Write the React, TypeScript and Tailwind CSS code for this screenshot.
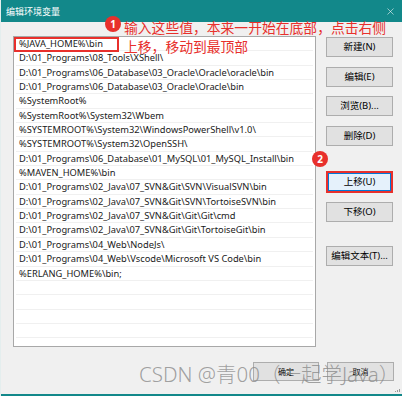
import { X } from 'lucide-react'

const paths = [
  '%JAVA_HOME%\\bin',
  'D:\\01_Programs\\08_Tools\\XShell\\',
  'D:\\01_Programs\\06_Database\\03_Oracle\\Oracle\\oracle\\bin',
  'D:\\01_Programs\\06_Database\\03_Oracle\\Oracle\\bin',
  '%SystemRoot%',
  '%SystemRoot%\\System32\\Wbem',
  '%SYSTEMROOT%\\System32\\WindowsPowerShell\\v1.0\\',
  '%SYSTEMROOT%\\System32\\OpenSSH\\',
  'D:\\01_Programs\\06_Database\\01_MySQL\\01_MySQL_Install\\bin',
  '%MAVEN_HOME%\\bin',
  'D:\\01_Programs\\02_Java\\07_SVN&Git\\SVN\\VisualSVN\\bin',
  'D:\\01_Programs\\02_Java\\07_SVN&Git\\SVN\\TortoiseSVN\\bin',
  'D:\\01_Programs\\02_Java\\07_SVN&Git\\Git\\Git\\cmd',
  'D:\\01_Programs\\02_Java\\07_SVN&Git\\Git\\TortoiseGit\\bin',
  'D:\\01_Programs\\04_Web\\NodeJs\\',
  'D:\\01_Programs\\04_Web\\Vscode\\Microsoft VS Code\\bin',
  '%ERLANG_HOME%\\bin;',
  '',
  '',
  '',
  '',
  '',
  '',
]

function Btn({ label, className = '' }: { label: string; className?: string }) {
  return (
    <div
      className={`w-[67px] h-[20px] flex items-center justify-center border border-[#adadad] bg-[#e1e1e1] text-[9.5px] text-black ${className}`}
    >
      {label}
    </div>
  )
}

function Badge({ n, className }: { n: string; className: string }) {
  return (
    <div
      className={`absolute w-[16px] h-[16px] rounded-full bg-[#e8302c] text-white text-[10px] font-bold flex items-center justify-center ${className}`}
    >
      {n}
    </div>
  )
}

export default function App() {
  return (
    <div
      className="relative w-[402px] h-[396px] bg-[#f0f0f0] flex flex-col overflow-hidden border-l border-[#e4eeee]"
      style={{ fontFamily: "'Noto Sans', 'Noto Sans CJK SC', sans-serif" }}
    >
      {/* title bar */}
      <div className="h-[22px] bg-[#12888a] flex items-center justify-between pl-[5px] pr-[6px] shrink-0">
        <span className="text-white text-[9px] leading-none">编辑环境变量</span>
        <X size={11} strokeWidth={1.2} className="text-white" />
      </div>

      <div className="flex pl-[12px] pt-[14px]">
        {/* list */}
        <div className="relative w-[303px] h-[311px] border border-[#a8a8a8] bg-white overflow-hidden px-[2px]">
          {paths.map((p, i) => (
            <div
              key={i}
              className="h-[14.35px] border-b border-[#f0f0f0] flex items-center pl-[3px] text-[9.3px] text-[#1a1a1a] whitespace-nowrap leading-none"
            >
              {p}
            </div>
          ))}
          <div className="absolute left-0 top-0 w-[105px] h-[15px] border-2 border-[#e8302c]" />
        </div>

        {/* side buttons */}
        <div className="flex flex-col ml-[10px] pt-[1px]">
          <Btn label="新建(N)" />
          <Btn label="编辑(E)" className="mt-[10px]" />
          <Btn label="浏览(B)..." className="mt-[9px]" />
          <Btn label="删除(D)" className="mt-[10px]" />
          <div className="mt-[25px] w-[67px] h-[22px] flex items-center justify-center bg-[#e5f1fb] shadow-[inset_0_0_0_2px_#e8302c,inset_0_0_0_3px_#0078d7] text-[9.5px] text-black">
            上移(U)
          </div>
          <Btn label="下移(O)" className="mt-[9px]" />
          <Btn label="编辑文本(T)..." className="mt-[24px]" />
        </div>
      </div>

      {/* bottom buttons */}
      <div className="flex justify-end gap-[8px] pr-[8px] mt-[15px]">
        <div className="w-[66px] h-[19px] flex items-center justify-center border border-[#adadad] bg-[#e1e1e1] text-[8px] text-black">
          确定
        </div>
        <div className="w-[67px] h-[19px] flex items-center justify-center border border-[#adadad] bg-[#e1e1e1] text-[8px] text-black">
          取消
        </div>
      </div>

      <div className="mt-auto h-[2px] bg-[#12888a]" />

      {/* annotations */}
      <Badge n="1" className="left-[104px] top-[16px]" />
      <div className="absolute left-[123px] top-[18px] text-[13.8px] leading-[19px] text-[#e8302c]">
        <div>输入这些值，本来一开始在底部，点击右侧</div>
        <div>上移，移动到最顶部</div>
      </div>
      <Badge n="2" className="left-[311px] top-[151px]" />

      {/* watermark */}
      <div className="absolute left-[138px] top-[364px] text-[20.5px] leading-none text-[#8a8a8a]/80 whitespace-nowrap font-light">
        CSDN @青00（一起学Java）
      </div>

      {/* size grip */}
      <div className="absolute right-[2px] bottom-[4px] flex gap-[1px] items-end">
        <div className="w-[1px] h-[1px] bg-[#999]" />
        <div className="w-[1px] h-[2px] bg-[#999]" />
        <div className="w-[1px] h-[3px] bg-[#999]" />
      </div>
    </div>
  )
}
